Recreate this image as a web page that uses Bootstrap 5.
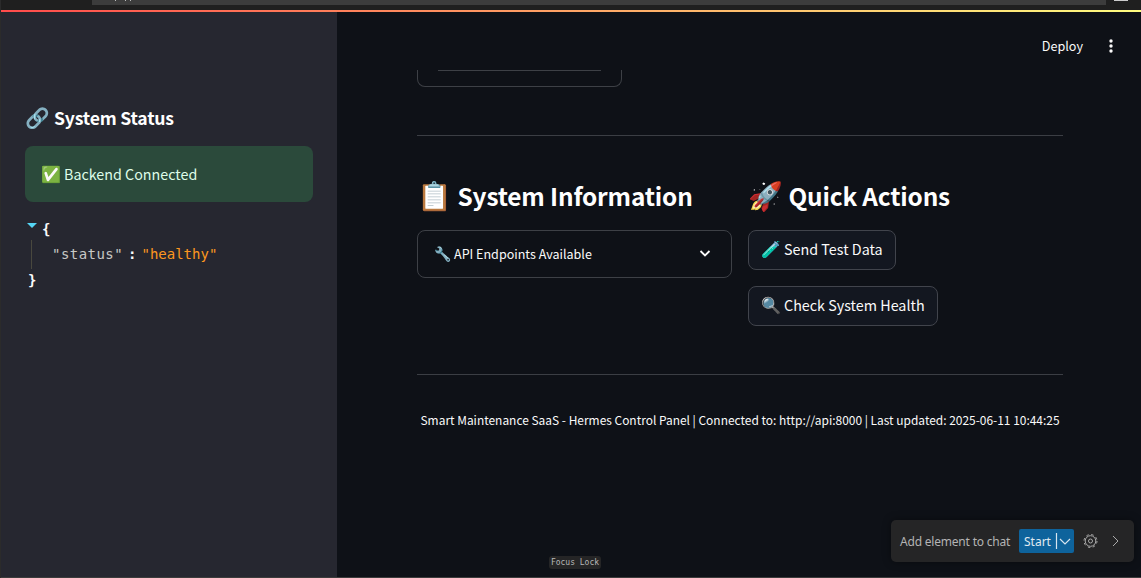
<!DOCTYPE html>
<html lang="en" data-bs-theme="dark">
<head>
<meta charset="utf-8">
<title>Hermes Control Panel</title>
<link href="https://cdn.jsdelivr.net/npm/bootstrap@5.3.0/dist/css/bootstrap.min.css" rel="stylesheet">
<style>
body{height:578px;overflow:hidden;background:#0e1117;color:#fafafa;font-family:"Noto Sans CJK JP","Noto Color Emoji",sans-serif;border-left:1px solid #2b2b2b}
.chrome{height:10px;background:#1f1f1f;padding-left:91px}
.address{width:1014px;height:5px;background:#3c3c3c;overflow:hidden;padding-left:23px}
.address i{width:1px;height:1px;background:#bbb;margin-right:9px}
.address i + i{margin-right:4px}
.tabend{width:14px;height:1px;background:#ccc;margin-left:8px}
.rainbow{height:2px;background:linear-gradient(90deg,#ff4b4b,#fffd80)}
.shell{height:565px}
.side{width:336px;background:#262730;padding:93px 24px 0}
.line{white-space:nowrap;display:flex;align-items:center}
.line .em{flex:none;text-align:left;font-family:"Noto Color Emoji",sans-serif;font-size:1.125em;line-height:1}
.side h2{font-size:17.6px;height:26px;margin:0 0 15px;font-weight:700;letter-spacing:-.2px}
.side h2 .em{padding-top:1px}
.ok{height:56px;border-radius:8px;background:#2b4a3b;color:#dffde9;padding:1px 0 0 16px;font-size:14.3px}
.ok .em{padding-top:1px}
.ok span + span,.act span + span{padding-bottom:2px}
.json{font:14px/26px "DejaVu Sans Mono",monospace;padding-top:14px}
.main{padding:0 78px 0 80px;min-width:0}
.top{height:58px;padding:10px 23px 0 0;font-size:12.6px;margin-right:-78px}
.clipped{width:205px;height:17px;border:1px solid #3d4046;border-top:0;border-radius:0 0 8px 8px;padding:0 20px}
.clipped div{height:1px;background:#3d4046}
.rule{height:1px;background:#3b3e44}
.main h1{font-size:24.4px;font-weight:700;height:40px;margin:0 0 14px;letter-spacing:-.17px}
.main h1 .em{font-size:28px;padding-top:2px}
.expander{width:315px;height:48px;border:1px solid #3d4046;border-radius:8px;padding:0 19px 0 16px;font-size:12.56px}
.act{height:40px;border:1px solid #41444c;border-radius:8px;background:#131720;font-size:14.33px;padding:0 12px}
.foot{font-size:11.94px;height:24px;padding-left:3.5px;margin-top:33px}
.toolbar{right:7px;top:520px;width:243px;height:42px;background:#252526;border-radius:5px;color:#b4b4b4;font:12px "Noto Sans",sans-serif;padding-left:9px;box-shadow:0 0 8px #0006}
.toolbar .prompt{width:110px;letter-spacing:-.2px}
.start{width:55px;height:24px;background:#0e639c;color:#e0eaf1;border-radius:2px;margin-left:9px;padding-left:5px}
.focus{left:549px;top:556px;width:52px;height:13px;border-radius:3px;background:#252526;color:#b8b8b8;font:8px/13px "DejaVu Sans Mono",monospace;text-align:center}
</style>
</head>
<body>
<div class="chrome d-flex"><div class="address d-flex"><i></i><i></i><i></i></div><div class="tabend"></div></div>
<div class="rainbow"></div>
<div class="shell d-flex">
<aside class="side flex-shrink-0">
<h2 class="line"><span class="em" style="width:29px">🔗</span><span>System Status</span></h2>
<div class="ok line"><span class="em" style="width:23px">✅</span><span>Backend Connected</span></div>
<div class="json">
<div class="line"><svg width="17" height="26"><path d="M2 7h10l-5 5z" fill="#55d6f5"/></svg><b>{</b></div>
<div class="line" style="height:24px"><svg width="27" height="29"><path d="M6.500 0v29" stroke="#49483e"/></svg><span style="color:#c8c8c5;letter-spacing:.45px">"status"</span><b style="padding:0 5px">:</b><span style="color:#fd971f">"healthy"</span></div>
<div class="line" style="padding-top:1px"><b style="margin-left:3px">}</b></div>
</div>
</aside>
<main class="main flex-grow-1">
<div class="top d-flex align-items-center justify-content-end"><span>Deploy</span><svg width="8" height="16" style="margin:0 3px 0 24px"><g fill="#fafafa"><circle cx="4" cy="3" r="1.700"/><circle cx="4" cy="8" r="1.700"/><circle cx="4" cy="13" r="1.700"/></g></svg></div>
<div class="clipped"><div></div></div>
<div class="rule" style="margin-top:48px"></div>
<div class="d-flex" style="padding-top:40px;height:238px;gap:16px">
<section style="width:315px"><h1 class="line"><span class="em" style="width:40.500px">📋</span><span>System Information</span></h1>
<div class="expander line"><span class="em" style="width:20px">🔧</span><span>API Endpoints Available</span><svg class="ms-auto" width="14" height="14" fill="none" stroke="#fafafa" stroke-width="1.8"><path d="m2.500 4 4.500 4.500 4.500-4.500"/></svg></div></section>
<section><h1 class="line"><span class="em" style="width:40.500px">🚀</span><span>Quick Actions</span></h1>
<div class="act line" style="width:148px;margin-bottom:16px"><span class="em" style="width:23px">🧪</span><span>Send Test Data</span></div>
<div class="act line" style="width:190px"><span class="em" style="width:23px">🔍</span><span>Check System Health</span></div></section>
</div>
<div class="rule"></div>
<div class="foot line"><span>Smart Maintenance SaaS - Hermes Control Panel | Connected to: http://api:8000 | Last updated: 2025-06-11 10:44:25</span></div>
</main>
</div>
<div style="height:1px;background:#3c3c3c"></div>
<div class="toolbar position-absolute line"><span class="prompt">Add element to chat</span><div class="start line"><span>Start</span><svg class="ms-auto flex-shrink-0" width="19" height="24" fill="none" stroke="#d7e5ef" stroke-width="1.2"><path d="M1.500 4v16M5 10l5 5 5-5"/></svg></div>
<svg class="flex-shrink-0" width="60" height="24" fill="none" stroke="#aaa"><g transform="translate(16.500 12)"><circle r="2"/><circle r="5.300"/><circle r="6.500" stroke-dasharray="2.500 2.600"/></g><path d="m39 7 5 5-5 5"/></svg></div>
<div class="focus position-absolute">Focus Lock</div>
<script src="https://cdn.jsdelivr.net/npm/bootstrap@5.3.0/dist/js/bootstrap.bundle.min.js"></script>
</body>
</html>
